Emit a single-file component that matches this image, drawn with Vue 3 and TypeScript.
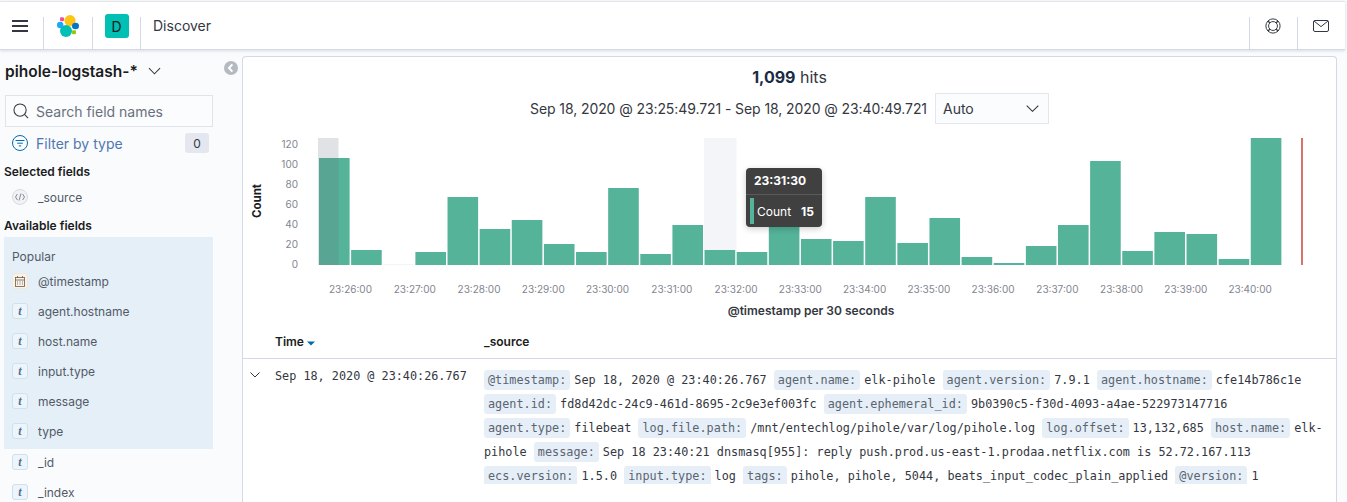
<script setup lang="ts">
const counts = [107,15,1,13,68,36,45,21,13,77,11,40,15,13,40,26,24,68,22,47,8,2,19,40,104,14,33,31,6,127]
const step = 32.13
const x0 = 319
const base = 265
const bars = counts.map((c, i) => ({ x: x0 + i * step, y: base - c, h: c, o: c < 2 ? 0.1 : 1 }))
const yTicks = [120,100,80,60,40,20,0].map(v => ({ v, y: 264.5 - v }))
const xTicks = ['23:26:00','23:27:00','23:28:00','23:29:00','23:30:00','23:31:00','23:32:00','23:33:00','23:34:00','23:35:00','23:36:00','23:37:00','23:38:00','23:39:00','23:40:00']
  .map((t, i) => ({ t, x: 350.5 + i * 64.26 }))
const popular = [
  { n: '@timestamp', k: 'date' },
  { n: 'agent.hostname', k: 't' },
  { n: 'host.name', k: 't' },
  { n: 'input.type', k: 't' },
  { n: 'message', k: 't' },
  { n: 'type', k: 't' },
]
const others = ['_id', '_index']
type Seg = { key: string; val: string }
const source: Seg[] = [
  { key: '@timestamp:', val: 'Sep 18, 2020 @ 23:40:26.767' },
  { key: 'agent.name:', val: 'elk-pihole' },
  { key: 'agent.version:', val: '7.9.1' },
  { key: 'agent.hostname:', val: 'cfe14b786c1e' },
  { key: 'agent.id:', val: 'fd8d42dc-24c9-461d-8695-2c9e3ef003fc' },
  { key: 'agent.ephemeral_id:', val: '9b0390c5-f30d-4093-a4ae-522973147716' },
  { key: 'agent.type:', val: 'filebeat' },
  { key: 'log.file.path:', val: '/mnt/entechlog/pihole/var/log/pihole.log' },
  { key: 'log.offset:', val: '13,132,685' },
  { key: 'host.name:', val: 'elk-pihole' },
  { key: 'message:', val: 'Sep 18 23:40:21 dnsmasq[955]: reply push.prod.us-east-1.prodaa.netflix.com is 52.72.167.113' },
  { key: 'ecs.version:', val: '1.5.0' },
  { key: 'input.type:', val: 'log' },
  { key: 'tags:', val: 'pihole, pihole, 5044, beats_input_codec_plain_applied' },
  { key: '@version:', val: '1' },
]
</script>

<template>
  <div class="page">
    <header class="top">
      <div class="cell menu">
        <svg width="16" height="12" viewBox="0 0 16 12"><path d="M0 1h16M0 6h16M0 11h16" stroke="#343741" stroke-width="2" fill="none"/></svg>
      </div>
      <div class="cell logo">
        <svg width="22" height="22" viewBox="0 0 22 22">
          <circle cx="13" cy="5.600" r="5.600" fill="#fec514"/>
          <circle cx="9" cy="16" r="6" fill="#00bfb3"/>
          <ellipse cx="3.200" cy="10" rx="3.200" ry="3.300" fill="#1ba9f5"/>
          <ellipse cx="18.500" cy="11" rx="3.500" ry="3.300" fill="#0077cc"/>
          <rect x="3" y="2.200" width="4" height="4" rx="1.200" fill="#f04e98"/>
          <rect x="15" y="15.200" width="4" height="4" rx="1" fill="#93c90e"/>
        </svg>
      </div>
      <div class="cell space"><span class="avatar">D</span></div>
      <div class="crumb">Discover</div>
      <div class="cell right life">
        <svg width="16" height="16" viewBox="0 0 18 18" fill="none" stroke="#343741" stroke-width="1.100"><circle cx="9" cy="9" r="8"/><circle cx="9" cy="9" r="5"/><path d="M3.300 3.300l2.200 2.200M14.700 3.300l-2.200 2.200M3.300 14.700l2.200-2.200M14.700 14.700l-2.200-2.200" stroke-width="1.500"/></svg>
      </div>
      <div class="cell right mail">
        <svg width="16" height="12" viewBox="0 0 16 12" fill="none" stroke="#343741" stroke-width="1"><rect x=".5" y=".5" width="15" height="11" rx="1.500"/><path d="M1 1l7 5.600L15 1"/></svg>
      </div>
    </header>

    <div class="body">
      <aside class="side">
        <div class="index">
          <span>pihole-logstash-*</span>
          <svg width="13" height="8" viewBox="0 0 14 8" fill="none" stroke="#343741" stroke-width="1.100"><path d="M1 1l6 6 6-6"/></svg>
        </div>
        <div class="search">
          <svg width="16" height="16" viewBox="0 0 17 17" fill="none" stroke="#343741" stroke-width="1.100"><circle cx="7.500" cy="7.500" r="6.500"/><path d="M12.200 12.200L16 16"/></svg>
          <span>Search field names</span>
        </div>
        <div class="filter">
          <svg width="16" height="16" viewBox="0 0 16 16" fill="none" stroke="#006bb4" stroke-width="1"><circle cx="8" cy="8" r="7.500"/><path d="M3.500 5.500h9M5.200 8.200h5.600M6.800 10.900h2.400"/></svg>
          <span class="ftext">Filter by type</span>
          <span class="count">0</span>
        </div>
        <h3 class="sel">Selected fields</h3>
        <div class="field">
          <span class="ficon code">
            <svg width="10" height="8" viewBox="0 0 10 8" fill="none" stroke="#69707d" stroke-width=".8"><path d="M2.400 1L.5 4l1.900 3M7.600 1l1.900 3-1.900 3M6 .5L4 7.500"/></svg>
          </span>
          <span>_source</span>
        </div>
        <h3 class="avail">Available fields</h3>
        <div class="popular">
          <div class="ptitle">Popular</div>
          <div v-for="f in popular" :key="f.n" class="field">
            <span v-if="f.k === 'date'" class="ficon date">
              <svg width="10" height="11" viewBox="0 0 10 11" fill="none" stroke="#7d6a55" stroke-width=".9"><rect x=".5" y="1.500" width="9" height="9"/><path d="M.5 4h9M2.500 0v2M7.500 0v2M2 6h1M4.500 6h1M7 6h1M2 8h1M4.500 8h1M7 8h1"/></svg>
            </span>
            <span v-else class="ficon str">t</span>
            <span>{{ f.n }}</span>
          </div>
        </div>
        <div v-for="n in others" :key="n" class="field">
          <span class="ficon str">t</span>
          <span>{{ n }}</span>
        </div>
        <span class="collapse">
          <svg width="14" height="14" viewBox="0 0 14 14"><circle cx="7" cy="7" r="7" fill="#b5b9c2"/><path d="M8.400 3.400L5 7l3.400 3.600" fill="none" stroke="#fff" stroke-width="2"/></svg>
        </span>
      </aside>

      <main class="panel">
        <div class="hits"><b>1,099</b> hits</div>
        <div class="range">
          <span class="rtext">Sep 18, 2020 @ 23:25:49.721 - Sep 18, 2020 @ 23:40:49.721</span>
          <div class="auto">
            <span>Auto</span>
            <svg width="13" height="7" viewBox="0 0 13 7" fill="none" stroke="#343741" stroke-width="1.100"><path d="M.7.7l5.800 5.600L12.300.7"/></svg>
          </div>
        </div>

        <div class="chart">
          <svg class="plot" width="1093" height="192" viewBox="243 130 1093 192">
            <rect x="704" y="138" width="32.500" height="127" fill="#f3f5f9"/>
            <rect v-for="(b, i) in bars" :key="i" :x="b.x" :y="b.y" width="30.600" :height="b.h" fill="#54b399" :fill-opacity="b.o"/>
            <rect x="318" y="138" width="20.500" height="127" fill="#69707d" fill-opacity=".2"/>
            <rect x="1301" y="138" width="2" height="127" fill="#d9726b"/>
            <text class="ytitle" transform="translate(261 201) rotate(-90)" text-anchor="middle">Count</text>
            <text v-for="t in yTicks" :key="t.v" class="tick" x="298" :y="t.y + 3.500" text-anchor="end">{{ t.v }}</text>
            <text v-for="t in xTicks" :key="t.t" class="tick" :x="t.x" y="293" text-anchor="middle">{{ t.t }}</text>
            <text class="xtitle" x="811" y="315" text-anchor="middle">@timestamp per 30 seconds</text>
          </svg>
          <div class="tooltip">
            <div class="tt-head">23:31:30</div>
            <div class="tt-row">
              <i class="swatch"></i>
              <span>Count</span>
              <b>15</b>
            </div>
          </div>
        </div>

        <div class="thead">
          <div class="th-time">Time
            <svg width="8" height="5" viewBox="0 0 8 5"><path d="M0 .5h8L4 4.500z" fill="#006bb4"/></svg>
          </div>
          <div class="th-src">_source</div>
        </div>
        <div class="row">
          <svg class="chev" width="10" height="6" viewBox="0 0 10 6" fill="none" stroke="#343741" stroke-width="1"><path d="M.5.5L5 5 9.500.5"/></svg>
          <div class="time">Sep 18, 2020 @ 23:40:26.767</div>
          <div class="src"><template v-for="s in source" :key="s.key"><span class="k">{{ s.key }}</span><span class="v">{{ s.val + ' ' }}</span></template></div>
        </div>
      </main>
    </div>
  </div>
</template>

<style>
html, body { margin: 0; background: #fafbfd; overflow: hidden; }
</style>

<style scoped>
.page {
  width: 1347px;
  height: 502px;
  overflow: hidden;
  display: flex;
  flex-direction: column;
  font-family: Inter, "Noto Sans", sans-serif;
  color: #343741;
  background: #fafbfd;
}
.top {
  height: 49px;
  margin-top: 1px;
  margin-right: 2px;
  flex: none;
  display: flex;
  align-items: stretch;
  background: #fff;
  border-top: 1px solid #e4e6ea;
  border-bottom: 1px solid #d3dae6;
  box-shadow: 0 1px 3px rgba(152,162,179,.35);
  box-sizing: border-box;
  padding-top: 15px;
}
.cell {
  display: flex;
  align-items: flex-start;
  justify-content: center;
  border-right: 1px solid #d3dae6;
  box-sizing: border-box;
}
.menu { width: 44px; padding-top: 3px; padding-right: 4px; }
.logo { width: 49px; }
.logo svg { margin-top: -2px; }
.space { width: 48px; }
.avatar {
  width: 24px;
  height: 24px;
  margin-top: -3px;
  background: #00bfb3;
  border-radius: 3px;
  display: flex;
  align-items: center;
  justify-content: center;
  font-size: 14px;
  color: #1a1c21;
}
.crumb { font-size: 14px; margin-left: 12px; line-height: 20px; flex: 1; margin-top: -1px; color: #343741; }
.right { width: 48px; border-right: 0; border-left: 1px solid #d3dae6; padding-right: 2px; }
.life { padding-top: 1px; }
.mail { padding-top: 3px; }

.body { flex: 1; display: flex; min-height: 0; padding-top: 6px; }
.side {
  width: 242px;
  flex: none;
  box-sizing: border-box;
  padding-left: 4px;
  position: relative;
}
.index {
  margin-left: 1px;
  margin-top: 6px;
  height: 18px;
  display: flex;
  align-items: center;
  gap: 10px;
  font-size: 15.500px;
  font-weight: 600;
  color: #1a1c21;
}
.search {
  margin: 15px 0 0 1px;
  width: 208px;
  height: 32px;
  box-sizing: border-box;
  border: 1px solid #dfe3ea;
  background: #fbfcfd;
  display: flex;
  align-items: center;
  gap: 7px;
  padding-left: 7px;
  font-size: 14px;
  color: #69707d;
}
.filter {
  margin: 6px 0 0 8px;
  width: 197px;
  height: 20px;
  display: flex;
  align-items: center;
  font-size: 14px;
  gap: 8px;
}
.ftext { color: #5077b0; flex: 1; }
.count {
  width: 24px;
  height: 20px;
  background: #e4e7ef;
  border-radius: 3px;
  display: flex;
  align-items: center;
  justify-content: center;
  font-size: 12px;
  color: #343741;
}
h3 { margin: 0; font-size: 12px; font-weight: 600; color: #1a1c21; line-height: 16px; }
.sel { margin-top: 11px; }
.avail { margin-top: 6px; }
.field {
  height: 30px;
  display: flex;
  align-items: center;
  gap: 10px;
  padding-left: 8px;
  font-size: 12px;
  color: #535966;
}
.sel + .field { margin-top: 2px; }
.popular + .field { margin-top: -2px; }
.ficon {
  width: 16px;
  height: 16px;
  flex: none;
  box-sizing: border-box;
  display: flex;
  align-items: center;
  justify-content: center;
  border-radius: 3px;
}
.code { border: 1px solid #d9dbe0; background: #f1f2f5; border-radius: 50%; }
.date { border: 1px solid #efe8dc; background: #f8f3ea; }
.str {
  border: 1px solid #cfe0ee;
  background: #edf4fa;
  font-family: "Liberation Serif", serif;
  font-style: italic;
  font-weight: 700;
  font-size: 12px;
  color: #4f6f94;
}
.popular {
  margin-top: 3px;
  width: 209px;
  height: 212px;
  background: #e4eff8;
  box-sizing: border-box;
  padding-top: 12px;
}
.ptitle { font-size: 12px; line-height: 16px; padding-left: 8px; color: #535966; margin-bottom: 1px; }
.collapse { position: absolute; left: 224px; top: 5px; line-height: 0; }

.panel {
  width: 1095px;
  flex: none;
  box-sizing: border-box;
  background: #fff;
  border: 1px solid #d3dae6;
  border-bottom: 0;
  border-radius: 4px 4px 0 0;
  position: relative;
}
.hits {
  text-align: center;
  font-size: 16px;
  margin-top: 10px;
  line-height: 20px;
  color: #343741;
}
.hits b { font-weight: 700; color: #1a2b44; }
.range {
  margin-top: 6px;
  height: 31px;
  display: flex;
  align-items: center;
  justify-content: center;
  gap: 8px;
  font-size: 14px;
  color: #343741;
}
.rtext { letter-spacing: -.09px; }
.auto {
  width: 114px;
  height: 31px;
  box-sizing: border-box;
  border: 1px solid #e3e6ec;
  background: #fbfcfd;
  display: flex;
  align-items: center;
  justify-content: space-between;
  padding: 0 9px 0 7px;
  font-size: 14px;
  color: #343741;
}
.chart { position: relative; height: 192px; margin-top: 6px; }
.plot { display: block; font-family: Inter, sans-serif; }
.tick { font-size: 10px; fill: #82858f; }
.ytitle { font-size: 11.500px; font-weight: 700; fill: #1a1c21; }
.xtitle { font-size: 12px; font-weight: 600; fill: #343741; }
.tooltip {
  position: absolute;
  left: 503px;
  top: 38px;
  width: 76px;
  height: 59px;
  background: #404040;
  border-radius: 4px;
  color: #fff;
  font-size: 12px;
  box-shadow: 0 2px 6px rgba(0,0,0,.2);
  z-index: 2;
}
.tt-head { height: 26px; line-height: 26px; padding-left: 8px; font-weight: 700; border-bottom: 1px solid #5a5a5a; }
.tt-row { display: flex; align-items: center; height: 32px; padding-left: 4px; gap: 3px; }
.tt-row b { margin-left: 7px; font-size: 12px; }
.swatch { width: 4px; height: 26px; background: #54b399; }
.thead { display: flex; height: 31px; margin-top: 5px; border-bottom: 1px solid #d3dae6; font-size: 12px; font-weight: 600; color: #1a1c21; line-height: 30px; }
.th-time { padding-left: 32px; flex: none; width: 209px; }
.th-src { flex: 1; }
.row { position: relative; display: flex; padding-top: 7px; }
.chev { position: absolute; left: 7px; top: 13px; }
.time {
  width: 209px;
  padding-left: 32px;
  flex: none;
  font-family: "DejaVu Sans Mono", "Liberation Mono", monospace;
  font-size: 11.800px;
  line-height: 20px;
  color: #343741;
}
.src {
  width: 841px;
  max-height: 116px;
  overflow: hidden;
  font-family: "DejaVu Sans Mono", "Liberation Mono", monospace;
  font-size: 11.800px;
  letter-spacing: .02px;
  line-height: 24px;
  color: #343741;
  margin-top: 2px;
}
.k { background: #e6eff7; border-radius: 3px; padding: 3px 4px; color: #5a6472; margin-right: 4px; }
</style>
